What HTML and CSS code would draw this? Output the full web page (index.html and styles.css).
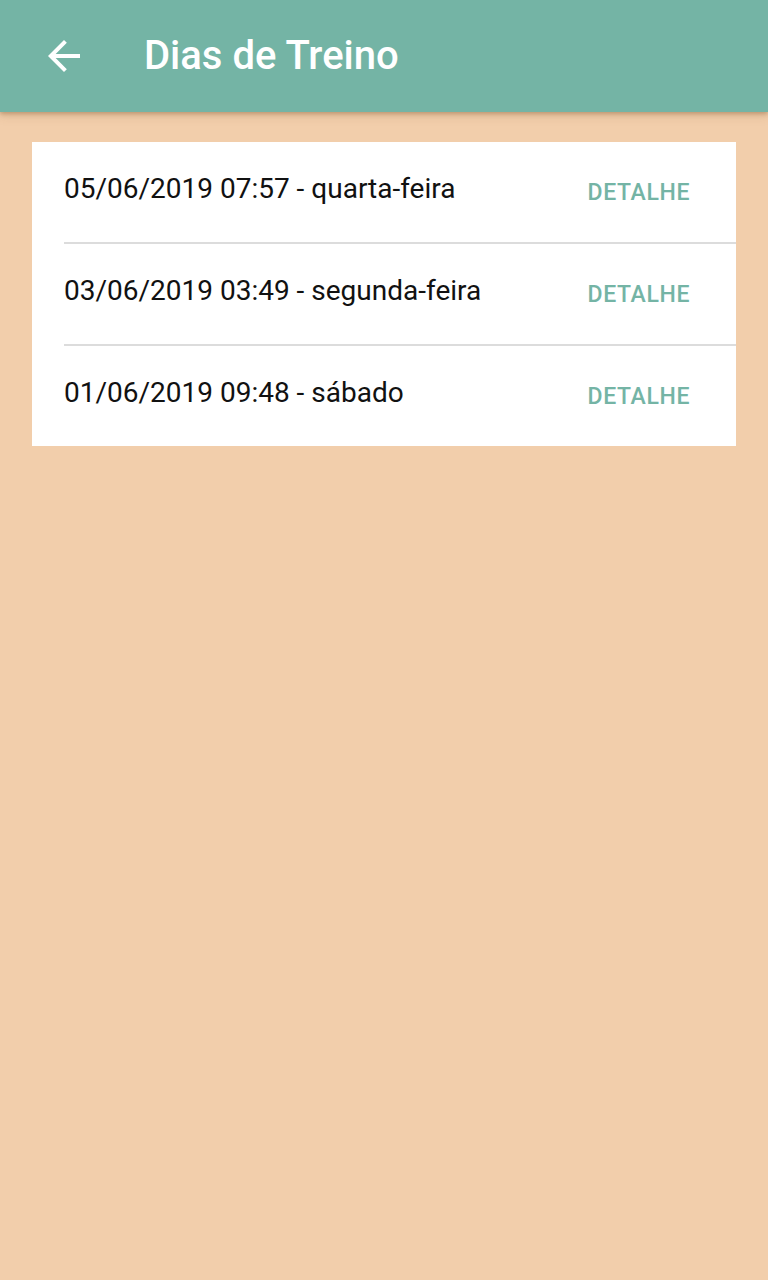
FILE: index.html
```html
<!DOCTYPE html>
<html lang="pt">
<head>
<meta charset="utf-8">
<title>Dias de Treino</title>
<link rel="stylesheet" href="styles.css">
</head>
<body>
<header class="appbar">
  <svg class="back" viewBox="0 0 24 24" width="48" height="48"><path d="M20 11H7.83l5.59-5.59L12 4l-8 8 8 8 1.41-1.41L7.83 13H20v-2z" fill="#fff"/></svg>
  <h1 class="title">Dias de Treino</h1>
</header>
<main class="content">
  <ul class="card">
    <li class="row"><span class="label">05/06/2019 07:57 - quarta-feira</span><span class="action">DETALHE</span></li>
    <li class="row"><span class="label">03/06/2019 03:49 - segunda-feira</span><span class="action">DETALHE</span></li>
    <li class="row"><span class="label">01/06/2019 09:48 - sábado</span><span class="action">DETALHE</span></li>
  </ul>
</main>
</body>
</html>
```
FILE: styles.css
```css
* { box-sizing: border-box; }
html, body { margin: 0; padding: 0; }
body {
  background: #f2ceab;
  font-family: Roboto, "Noto Sans", sans-serif;
  min-height: 1280px;
}
.appbar {
  height: 112px;
  background: #74b4a5;
  display: flex;
  align-items: center;
  padding-left: 40px;
  box-shadow: 0 2px 4px rgba(120, 80, 40, 0.35), 0 4px 10px rgba(120, 80, 40, 0.15);
  position: relative;
  z-index: 1;
}
.back { display: block; flex: none; }
.title {
  margin: 0 0 0 56px;
  color: #fff;
  font-size: 40px;
  font-weight: 500;
  line-height: 1;
}
.content { padding: 30px 32px; }
.card {
  list-style: none;
  margin: 0;
  padding: 0;
  background: #fff;
}
.row {
  height: 102px;
  margin-left: 32px;
  display: flex;
  align-items: center;
  justify-content: space-between;
  border-bottom: 2px solid #dcdcdc;
  padding-right: 46px;
}
.row:last-child { border-bottom: none; height: 100px; }
.label {
  font-size: 28px;
  color: #111;
  margin-top: -7px;
}
.action {
  font-size: 23px;
  font-weight: 500;
  color: #74b4a5;
  letter-spacing: 0.6px;
}
```
